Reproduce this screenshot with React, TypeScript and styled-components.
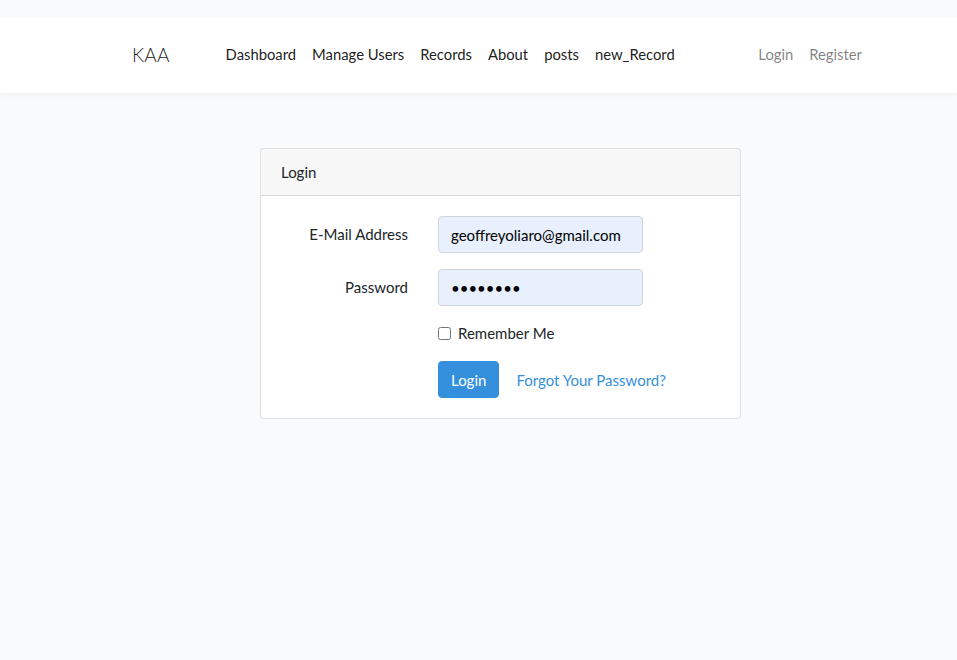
import React from "react";
import styled, { createGlobalStyle } from "styled-components";

const Global = createGlobalStyle`
  html, body { margin: 0; padding: 0; }
  body {
    background: #f8fafc;
    font-family: "Lato", "Noto Sans", sans-serif;
    font-size: 15px;
    color: #212529;
  }
`;

const Page = styled.div`
  padding-top: 18px;
  min-height: 642px;
`;

const Navbar = styled.nav`
  height: 75px;
  background: #fff;
  box-shadow: 0 2px 4px rgba(0, 0, 0, 0.04);
  display: flex;
  align-items: center;
  padding: 0 87px 2px 132px;
  box-sizing: border-box;
`;

const Brand = styled.a`
  font-size: 19px;
  font-weight: 300;
  color: rgba(0, 0, 0, 0.9);
  text-decoration: none;
  margin-right: 48px;
  letter-spacing: 0.2px;
`;

const NavList = styled.div<{ $right?: boolean }>`
  display: flex;
  align-items: center;
  margin-left: ${(p) => (p.$right ? "auto" : "0")};
`;

const NavLink = styled.a<{ $muted?: boolean }>`
  padding: 8px;
  font-size: 14.8px;
  color: ${(p) => (p.$muted ? "rgba(0,0,0,0.5)" : "rgba(0,0,0,0.9)")};
  text-decoration: none;
  line-height: 23px;
`;

const Main = styled.main`
  padding: 55px 0 0 260px;
`;

const Card = styled.div`
  width: 481px;
  box-sizing: border-box;
  background: #fff;
  border: 1px solid rgba(0, 0, 0, 0.125);
  border-radius: 4px;
`;

const CardHeader = styled.div`
  height: 45px;
  display: flex;
  align-items: center;
  padding: 0 20px 1px;
  box-sizing: content-box;
  background: rgba(0, 0, 0, 0.03);
  border-bottom: 1px solid rgba(0, 0, 0, 0.125);
`;

const CardBody = styled.div`
  padding: 20px;
  display: grid;
  grid-template-columns: 127px 205px;
  column-gap: 30px;
  row-gap: 16px;
  align-items: center;
`;

const Label = styled.label`
  text-align: right;
  line-height: 23px;
  white-space: nowrap;
`;

const Input = styled.input`
  box-sizing: border-box;
  width: 205px;
  height: 37px;
  padding: 0 12px;
  border: 1px solid #ced4da;
  border-radius: 4px;
  background: #e8f0fe;
  font-family: inherit;
  font-size: 15px;
  color: #000;
  outline: none;
`;

const CheckRow = styled.label`
  grid-column: 2;
  display: flex;
  align-items: center;
  gap: 7px;
  line-height: 23px;
  white-space: nowrap;
`;

const Check = styled.input`
  margin: 0;
  width: 13px;
  height: 13px;
`;

const Actions = styled.div`
  grid-column: 2;
  display: flex;
  align-items: center;
  gap: 17px;
  white-space: nowrap;
`;

const Button = styled.button`
  height: 37px;
  padding: 0 12px;
  border: 1px solid #3490dc;
  border-radius: 4px;
  background: #3490dc;
  color: #fff;
  font-family: inherit;
  font-size: 15px;
  cursor: pointer;
`;

const Link = styled.a`
  color: #3490dc;
  text-decoration: none;
`;

export default function App() {
  return (
    <Page>
      <Global />
      <Navbar>
        <Brand href="#">KAA</Brand>
        <NavList>
          <NavLink href="#">Dashboard</NavLink>
          <NavLink href="#">Manage Users</NavLink>
          <NavLink href="#">Records</NavLink>
          <NavLink href="#">About</NavLink>
          <NavLink href="#">posts</NavLink>
          <NavLink href="#">new_Record</NavLink>
        </NavList>
        <NavList $right>
          <NavLink $muted href="#">Login</NavLink>
          <NavLink $muted href="#">Register</NavLink>
        </NavList>
      </Navbar>
      <Main>
        <Card>
          <CardHeader>Login</CardHeader>
          <CardBody>
            <Label htmlFor="email">E-Mail Address</Label>
            <Input id="email" type="email" defaultValue="geoffreyoliaro@gmail.com" />
            <Label htmlFor="password">Password</Label>
            <Input id="password" type="password" defaultValue="12345678" />
            <CheckRow>
              <Check type="checkbox" />
              Remember Me
            </CheckRow>
            <Actions>
              <Button type="button">Login</Button>
              <Link href="#">Forgot Your Password?</Link>
            </Actions>
          </CardBody>
        </Card>
      </Main>
    </Page>
  );
}
